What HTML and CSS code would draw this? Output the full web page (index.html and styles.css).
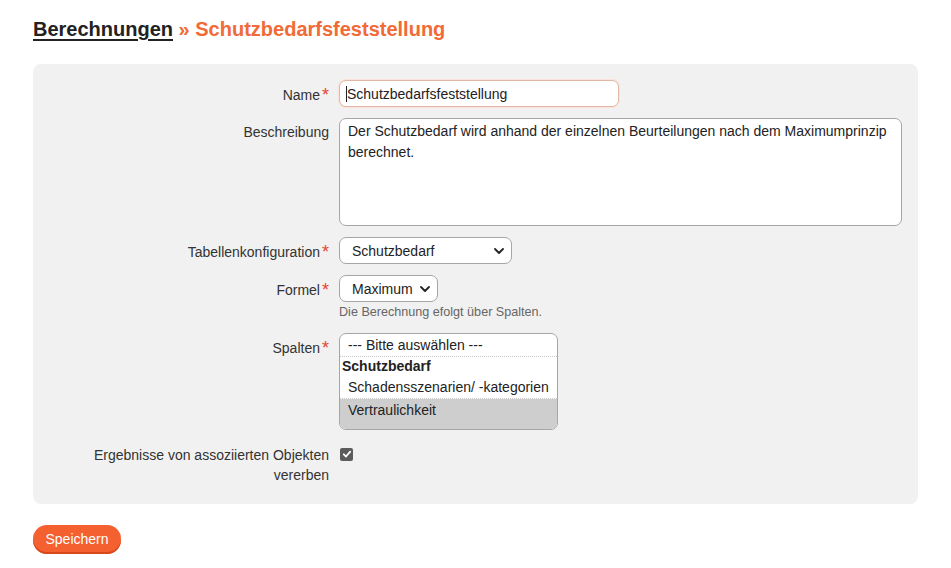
FILE: index.html
```html
<!DOCTYPE html>
<html lang="de">
<head>
<meta charset="utf-8">
<title>Schutzbedarfsfeststellung</title>
<link rel="stylesheet" href="styles.css">
</head>
<body>
<main class="page">
  <h1 class="title"><a class="crumb" href="#">Berechnungen</a> <span class="current">» Schutzbedarfsfeststellung</span></h1>
  <form class="panel">
    <label class="label req" for="name">Name</label>
    <div class="field">
      <div class="input-wrap">
        <input id="name" class="input focused" type="text" value="Schutzbedarfsfeststellung">
        <span class="caret"></span>
      </div>
    </div>

    <label class="label" for="desc">Beschreibung</label>
    <div class="field">
      <textarea id="desc" class="textarea">Der Schutzbedarf wird anhand der einzelnen Beurteilungen nach dem Maximumprinzip berechnet.</textarea>
    </div>

    <label class="label req" for="tab">Tabellenkonfiguration</label>
    <div class="field">
      <div class="select sel-tab">
        <span>Schutzbedarf</span>
        <svg class="chev" viewBox="0 0 10 6" width="10" height="6"><path d="M1 1l4 4 4-4" fill="none" stroke="#222" stroke-width="1.8" stroke-linecap="round" stroke-linejoin="round"/></svg>
      </div>
    </div>

    <label class="label req" for="formel">Formel</label>
    <div class="field">
      <div class="select sel-formel">
        <span>Maximum</span>
        <svg class="chev" viewBox="0 0 10 6" width="10" height="6"><path d="M1 1l4 4 4-4" fill="none" stroke="#222" stroke-width="1.8" stroke-linecap="round" stroke-linejoin="round"/></svg>
      </div>
      <div class="help">Die Berechnung efolgt über Spalten.</div>
    </div>

    <label class="label req spalten-label">Spalten</label>
    <div class="field spalten-field">
      <div class="listbox">
        <div class="opt sep">--- Bitte auswählen ---</div>
        <div class="group">Schutzbedarf</div>
        <div class="opt sep">Schadensszenarien/ -kategorien</div>
        <div class="opt selected">Vertraulichkeit</div>
      </div>
    </div>

    <label class="label check-label">Ergebnisse von assoziierten Objekten vererben</label>
    <div class="field check-field">
      <span class="checkbox">
        <svg viewBox="0 0 12 12" width="12" height="12"><path d="M2.8 6.3l2.2 2.2 4.2-4.8" fill="none" stroke="#fff" stroke-width="1.8" stroke-linecap="round" stroke-linejoin="round"/></svg>
      </span>
    </div>
  </form>
  <button class="btn" type="button">Speichern</button>
</main>
</body>
</html>
```
FILE: styles.css
```css
* { box-sizing: border-box; }
html, body { margin: 0; padding: 0; background: #fff; }
body {
  font-family: "Liberation Sans", Arial, sans-serif;
  font-size: 14px;
  color: #333;
}
.page { padding: 17px 33px 0 33px; }
.title {
  margin: 0;
  font-size: 20px;
  line-height: 24px;
  font-weight: bold;
}
.crumb { color: #222; text-decoration: underline; text-underline-offset: 3px; text-decoration-thickness: 2px; }
.current { color: #f26a35; }

.panel {
  margin-top: 23px;
  background: #f1f1f1;
  border-radius: 8px;
  padding: 16px 16px 19px 56px;
  display: grid;
  grid-template-columns: 240px 1fr;
  column-gap: 10px;
  row-gap: 11px;
}
.label {
  text-align: right;
  line-height: 20px;
  padding-top: 4px;
  color: #333;
}
.label.req::after {
  content: "*";
  color: #e8452c;
  font-size: 18px;
  margin-left: 2px;
  position: relative;
  top: 1px;
}
.field { min-width: 0; }

.input-wrap { position: relative; width: 280px; }
.input {
  display: block;
  width: 280px;
  height: 27px;
  border: 1px solid #e2b7a6;
  box-shadow: 0 0 0 1px #fae3da;
  border-radius: 7px;
  background: #fff;
  font: inherit;
  color: #222;
  padding: 0 7px;
  outline: none;
}
.caret {
  position: absolute;
  left: 7px;
  top: 6px;
  width: 1px;
  height: 16px;
  background: #222;
}
.textarea {
  display: block;
  width: 563px;
  height: 108px;
  border: 1px solid #a6a6a6;
  border-radius: 7px;
  background: #fff;
  font: inherit;
  color: #222;
  line-height: 21px;
  padding: 2px 8px;
  resize: none;
  outline: none;
}
.select {
  display: flex;
  align-items: center;
  justify-content: space-between;
  height: 27px;
  border: 1px solid #a6a6a6;
  border-radius: 7px;
  background: #fff;
  color: #222;
  padding: 0 7px 0 12px;
}
.sel-tab { width: 173px; }
.sel-formel { width: 99px; }
.chev { display: block; }
.help {
  font-size: 12.6px;
  color: #666;
  margin-top: 3px;
  line-height: 14px;
}
.spalten-label, .spalten-field { margin-top: 3px; }
.listbox {
  width: 219px;
  height: 97px;
  border: 1px solid #a6a6a6;
  border-radius: 7px;
  background: #fff;
  overflow: hidden;
  display: flex;
  flex-direction: column;
  color: #222;
}
.opt { padding: 2px 8px 0 8px; line-height: 19px; }
.opt.sep { border-bottom: 1px dotted #c8c8c8; height: 23px; }
.opt:first-child { height: 23px; padding-top: 2px; }
.group { font-weight: bold; padding: 0 2px; line-height: 19px; height: 19px; }
.opt.selected { background: #cecece; flex: 1; padding-top: 2px; }

.check-label, .check-field { margin-top: 1px; }
.check-label { padding-top: 3px; }
.check-field { padding-top: 5px; }
.checkbox {
  display: inline-flex;
  align-items: center;
  justify-content: center;
  width: 13px;
  height: 13px;
  margin-left: 1px;
  border-radius: 2px;
  background: #5c5c5c;
}
.checkbox svg { display: block; }

.btn {
  margin-top: 21px;
  display: block;
  width: 88px;
  height: 29px;
  border: none;
  border-radius: 14px;
  background: #f4602f;
  box-shadow: inset 0 -2px 0 #d8481a;
  color: #fff;
  font: inherit;
  font-size: 14px;
  padding: 0 0 2px 0;
}
```
